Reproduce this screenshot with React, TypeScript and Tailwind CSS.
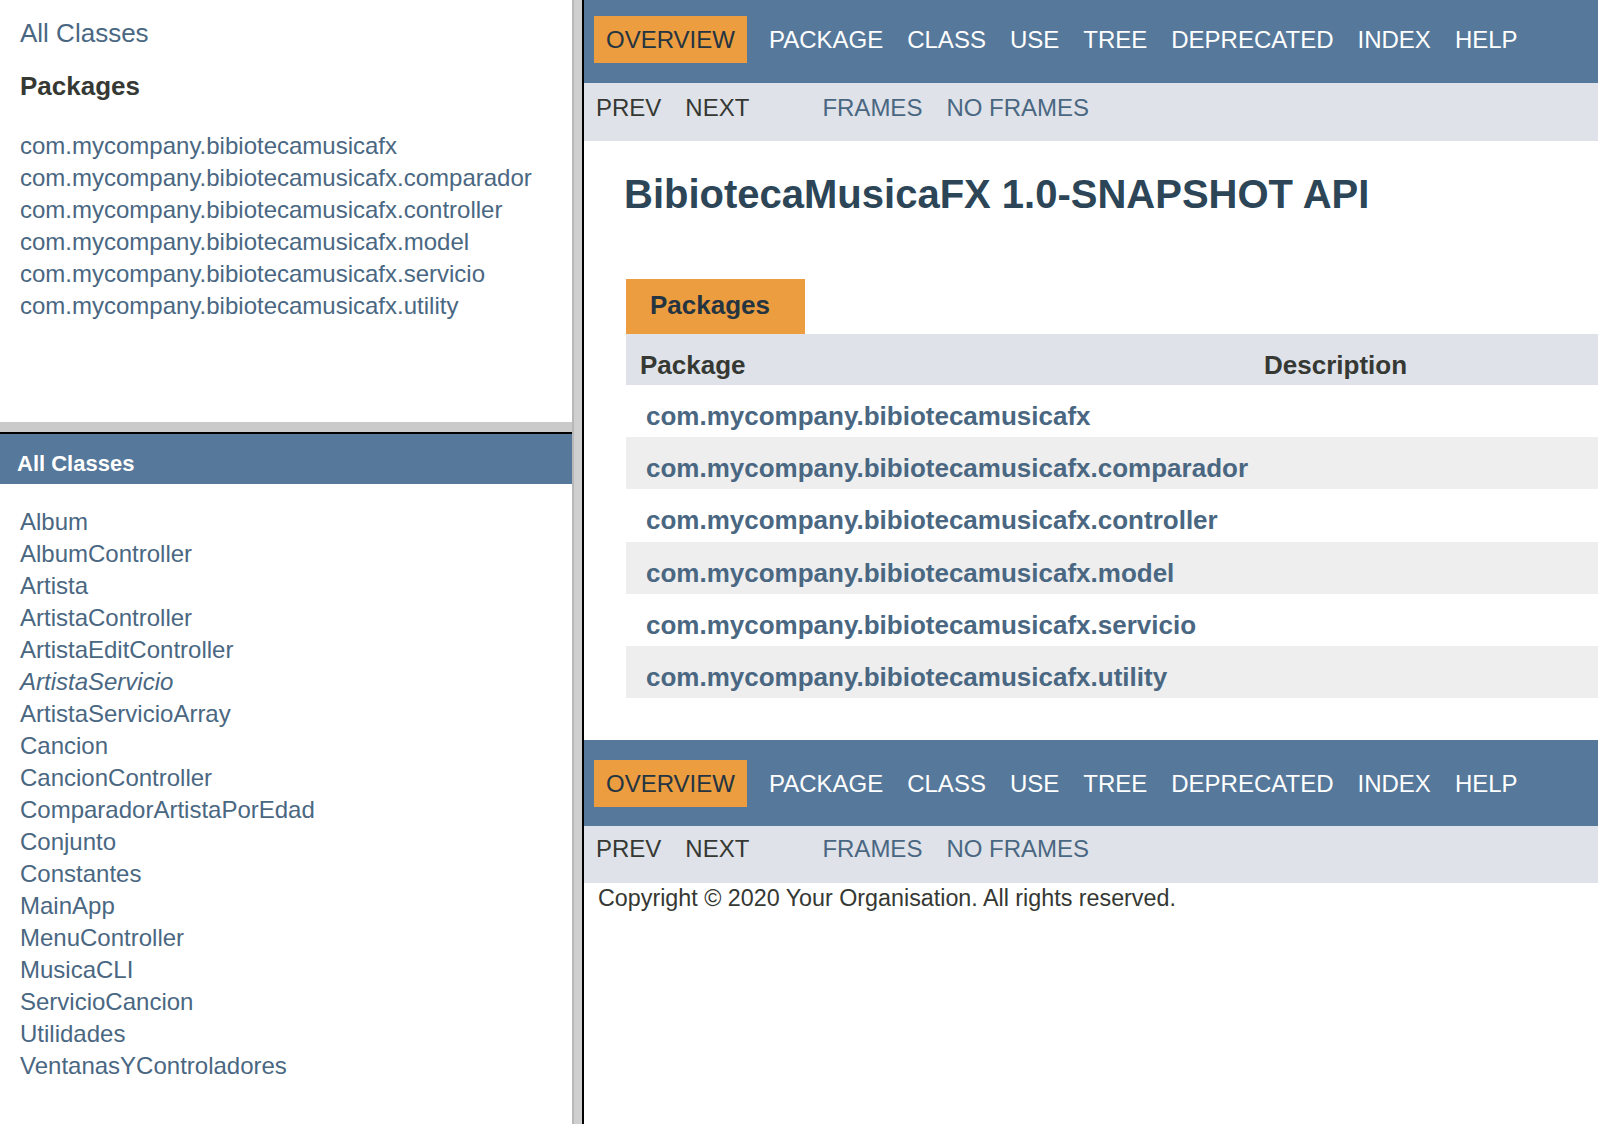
const packages = [
  "com.mycompany.bibiotecamusicafx",
  "com.mycompany.bibiotecamusicafx.comparador",
  "com.mycompany.bibiotecamusicafx.controller",
  "com.mycompany.bibiotecamusicafx.model",
  "com.mycompany.bibiotecamusicafx.servicio",
  "com.mycompany.bibiotecamusicafx.utility",
];

const classes = [
  { name: "Album" },
  { name: "AlbumController" },
  { name: "Artista" },
  { name: "ArtistaController" },
  { name: "ArtistaEditController" },
  { name: "ArtistaServicio", iface: true },
  { name: "ArtistaServicioArray" },
  { name: "Cancion" },
  { name: "CancionController" },
  { name: "ComparadorArtistaPorEdad" },
  { name: "Conjunto" },
  { name: "Constantes" },
  { name: "MainApp" },
  { name: "MenuController" },
  { name: "MusicaCLI" },
  { name: "ServicioCancion" },
  { name: "Utilidades" },
  { name: "VentanasYControladores" },
];

const navItems = ["Package", "Class", "Use", "Tree", "Deprecated", "Index", "Help"];

function TopNav({ bottom = false }: { bottom?: boolean }) {
  return (
    <div>
      <div className={`bg-[#56789a] ${bottom ? "h-[86px] pt-[20px]" : "h-[83px] pt-[16px]"}`}>
        <ul className="flex text-[24px] leading-[27px] uppercase">
          <li className="mx-[10px] bg-[#ec9d3f] px-[12px] py-[10px] text-[#253441]">Overview</li>
          {navItems.map((item) => (
            <li key={item} className="px-[12px] py-[10px] text-white">
              {item}
            </li>
          ))}
        </ul>
      </div>
      <div className={`bg-[#dfe2e8] ${bottom ? "h-[57px] pt-[9px]" : "h-[58px] pt-[11px]"}`}>
        <ul className="flex text-[24px] leading-[27px] uppercase">
          <li className="px-[12px] text-[#353833]">Prev</li>
          <li className="px-[12px] text-[#353833]">Next</li>
          <li className="ml-[49px] px-[12px] text-[#4a6782]">Frames</li>
          <li className="px-[12px] text-[#4a6782]">No Frames</li>
        </ul>
      </div>
    </div>
  );
}

export default function App() {
  return (
    <div className="flex h-[1124px] w-[1598px] overflow-hidden bg-white font-['Liberation_Sans',Arial,sans-serif] text-[#353833]">
      {/* left frames */}
      <div className="flex w-[572px] shrink-0 flex-col">
        <div className="h-[422px] pl-[20px] pt-[18px]">
          <div className="text-[26px] leading-[30px] text-[#4a6782]">All Classes</div>
          <h2 className="mt-[23px] text-[26px] font-bold leading-[30px] text-[#353833]">Packages</h2>
          <ul className="mt-[27px] text-[24px] text-[#4a6782]">
            {packages.map((p) => (
              <li key={p} className="pt-[4px] leading-[28px]">
                {p}
              </li>
            ))}
          </ul>
        </div>
        <div className="h-[10px] bg-[#cacaca]" />
        <div className="flex-1 border-t-2 border-black">
          <div className="h-[50px] bg-[#56789a] pl-[17px] pt-[17px] text-[22px] font-bold leading-[25px] text-white">
            All Classes
          </div>
          <ul className="mt-[20px] pl-[20px] text-[24px] text-[#4a6782]">
            {classes.map((c) => (
              <li key={c.name} className={`pt-[4px] leading-[28px] ${c.iface ? "italic" : ""}`}>
                {c.name}
              </li>
            ))}
          </ul>
        </div>
      </div>

      {/* frame divider */}
      <div className="w-[10px] shrink-0 border-l-2 border-[#b8b8b8] bg-[#cfcfcf]" />

      {/* right frame */}
      <div className="min-w-0 flex-1 border-l-2 border-black">
        <TopNav />
        <h1 className="ml-[40px] mt-[30px] text-[40px] font-bold leading-[46px] text-[#2c4557]">
          BibiotecaMusicaFX 1.0-SNAPSHOT API
        </h1>
        <div className="ml-[42px] mt-[62px]">
          <div className="h-[55px] w-[179px] bg-[#ec9d3f] pl-[24px] pt-[11px] text-[26px] font-bold leading-[30px] text-[#253441]">
            Packages
          </div>
          <div className="grid h-[51px] grid-cols-[624px_1fr] bg-[#dfe2e8] pt-[16px] text-[26px] font-bold leading-[30px] text-[#353833]">
            <div className="pl-[14px]">Package</div>
            <div className="pl-[14px]">Description</div>
          </div>
          {packages.map((p, i) => (
            <div
              key={p}
              className={`grid h-[52.2px] grid-cols-[624px_1fr] pt-[16px] text-[26px] font-bold leading-[30px] text-[#4a6782] ${
                i % 2 === 0 ? "bg-white" : "bg-[#eeeeef]"
              }`}
            >
              <div className="pl-[20px] whitespace-nowrap">{p}</div>
              <div />
            </div>
          ))}
        </div>
        <div className="mt-[42px]">
          <TopNav bottom />
        </div>
        <p className="ml-[14px] mt-[2px] text-[23.3px] leading-[27px] text-[#353833]">
          Copyright © 2020 Your Organisation. All rights reserved.
        </p>
      </div>
    </div>
  );
}
